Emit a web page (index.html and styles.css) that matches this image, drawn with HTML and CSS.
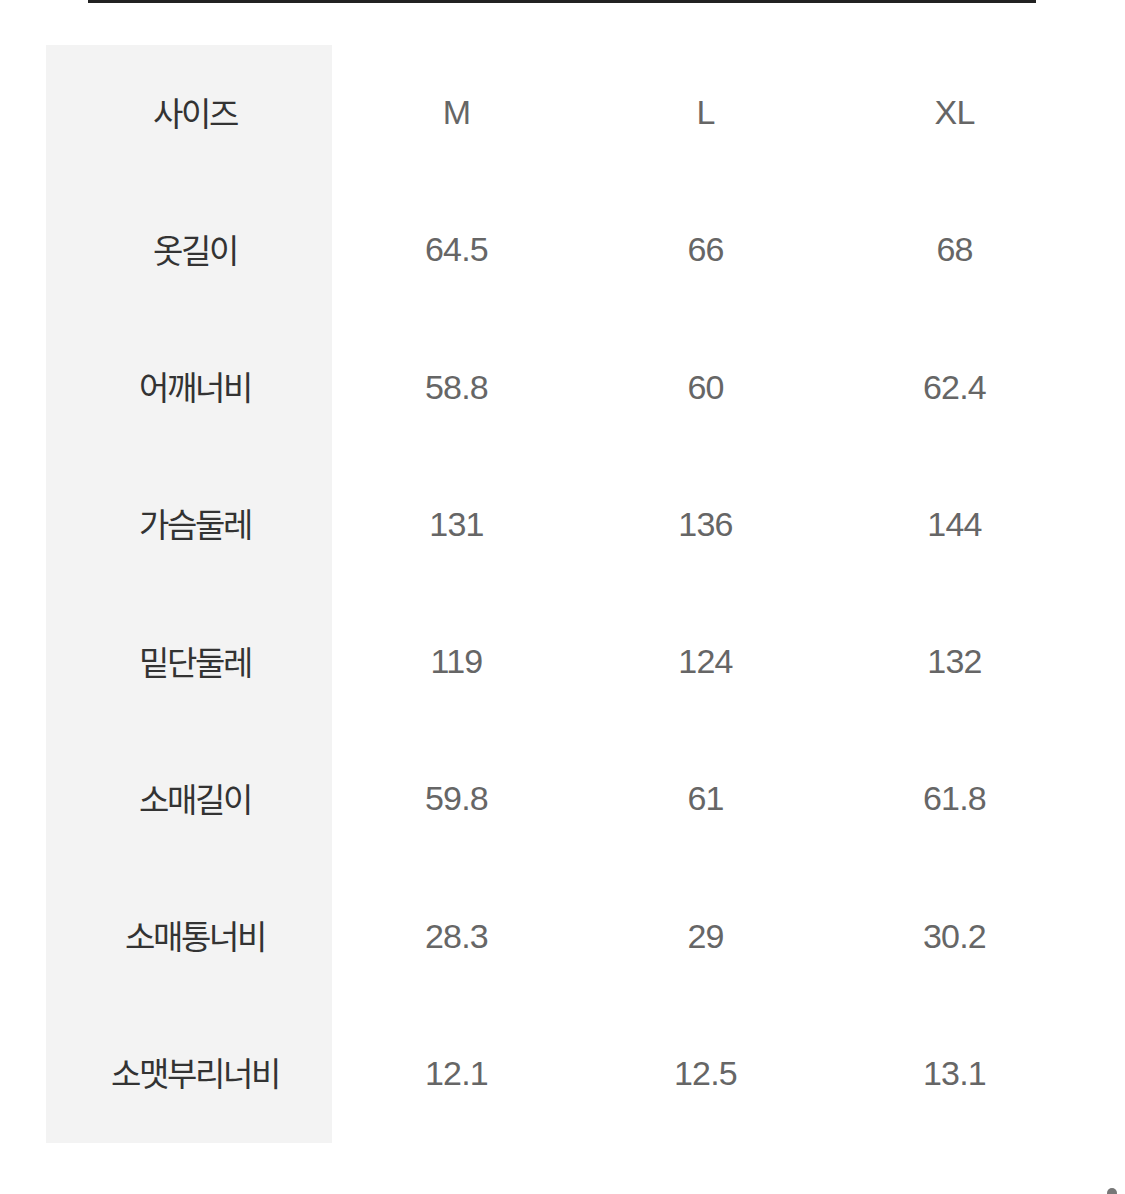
FILE: index.html
```html
<!DOCTYPE html>
<html lang="ko">
<head>
<meta charset="utf-8">
<link rel="stylesheet" href="styles.css">
</head>
<body>
<div class="page">
  <div class="topline"></div>
  <div class="size-table">
    <div class="label">사이즈</div><div class="val">M</div><div class="val">L</div><div class="val">XL</div>
    <div class="label">옷길이</div><div class="val">64.5</div><div class="val">66</div><div class="val">68</div>
    <div class="label">어깨너비</div><div class="val">58.8</div><div class="val">60</div><div class="val">62.4</div>
    <div class="label">가슴둘레</div><div class="val">131</div><div class="val">136</div><div class="val">144</div>
    <div class="label">밑단둘레</div><div class="val">119</div><div class="val">124</div><div class="val">132</div>
    <div class="label">소매길이</div><div class="val">59.8</div><div class="val">61</div><div class="val">61.8</div>
    <div class="label">소매통너비</div><div class="val">28.3</div><div class="val">29</div><div class="val">30.2</div>
    <div class="label">소맷부리너비</div><div class="val">12.1</div><div class="val">12.5</div><div class="val">13.1</div>
  </div>
  <div class="corner-dot"></div>
</div>
</body>
</html>
```

FILE: styles.css
```css
html, body {
  margin: 0;
  padding: 0;
  background: #ffffff;
}
.page {
  position: relative;
  width: 1125px;
  height: 1194px;
  overflow: hidden;
}
.topline {
  margin-left: 88px;
  width: 948px;
  height: 3px;
  background: #222222;
}
.size-table {
  margin-top: 42px;
  margin-left: 46px;
  display: grid;
  grid-template-columns: 286px 249px 249px 249px;
  grid-auto-rows: 137.25px;
}
.label {
  background: #f3f3f3;
  display: flex;
  align-items: center;
  justify-content: center;
  padding-left: 12px;
  padding-bottom: 4px;
  font-family: "Noto Sans CJK KR", "Noto Sans", sans-serif;
  font-size: 33px;
  letter-spacing: -2.4px;
  color: #333333;
}
.val {
  display: flex;
  align-items: center;
  justify-content: center;
  padding-bottom: 2px;
  font-family: "Liberation Sans", Arial, sans-serif;
  font-size: 34px;
  letter-spacing: -0.8px;
  color: #666666;
}
.corner-dot {
  position: absolute;
  left: 1107px;
  top: 1188px;
  width: 10px;
  height: 10px;
  border-radius: 50%;
  background: #777777;
}
```
